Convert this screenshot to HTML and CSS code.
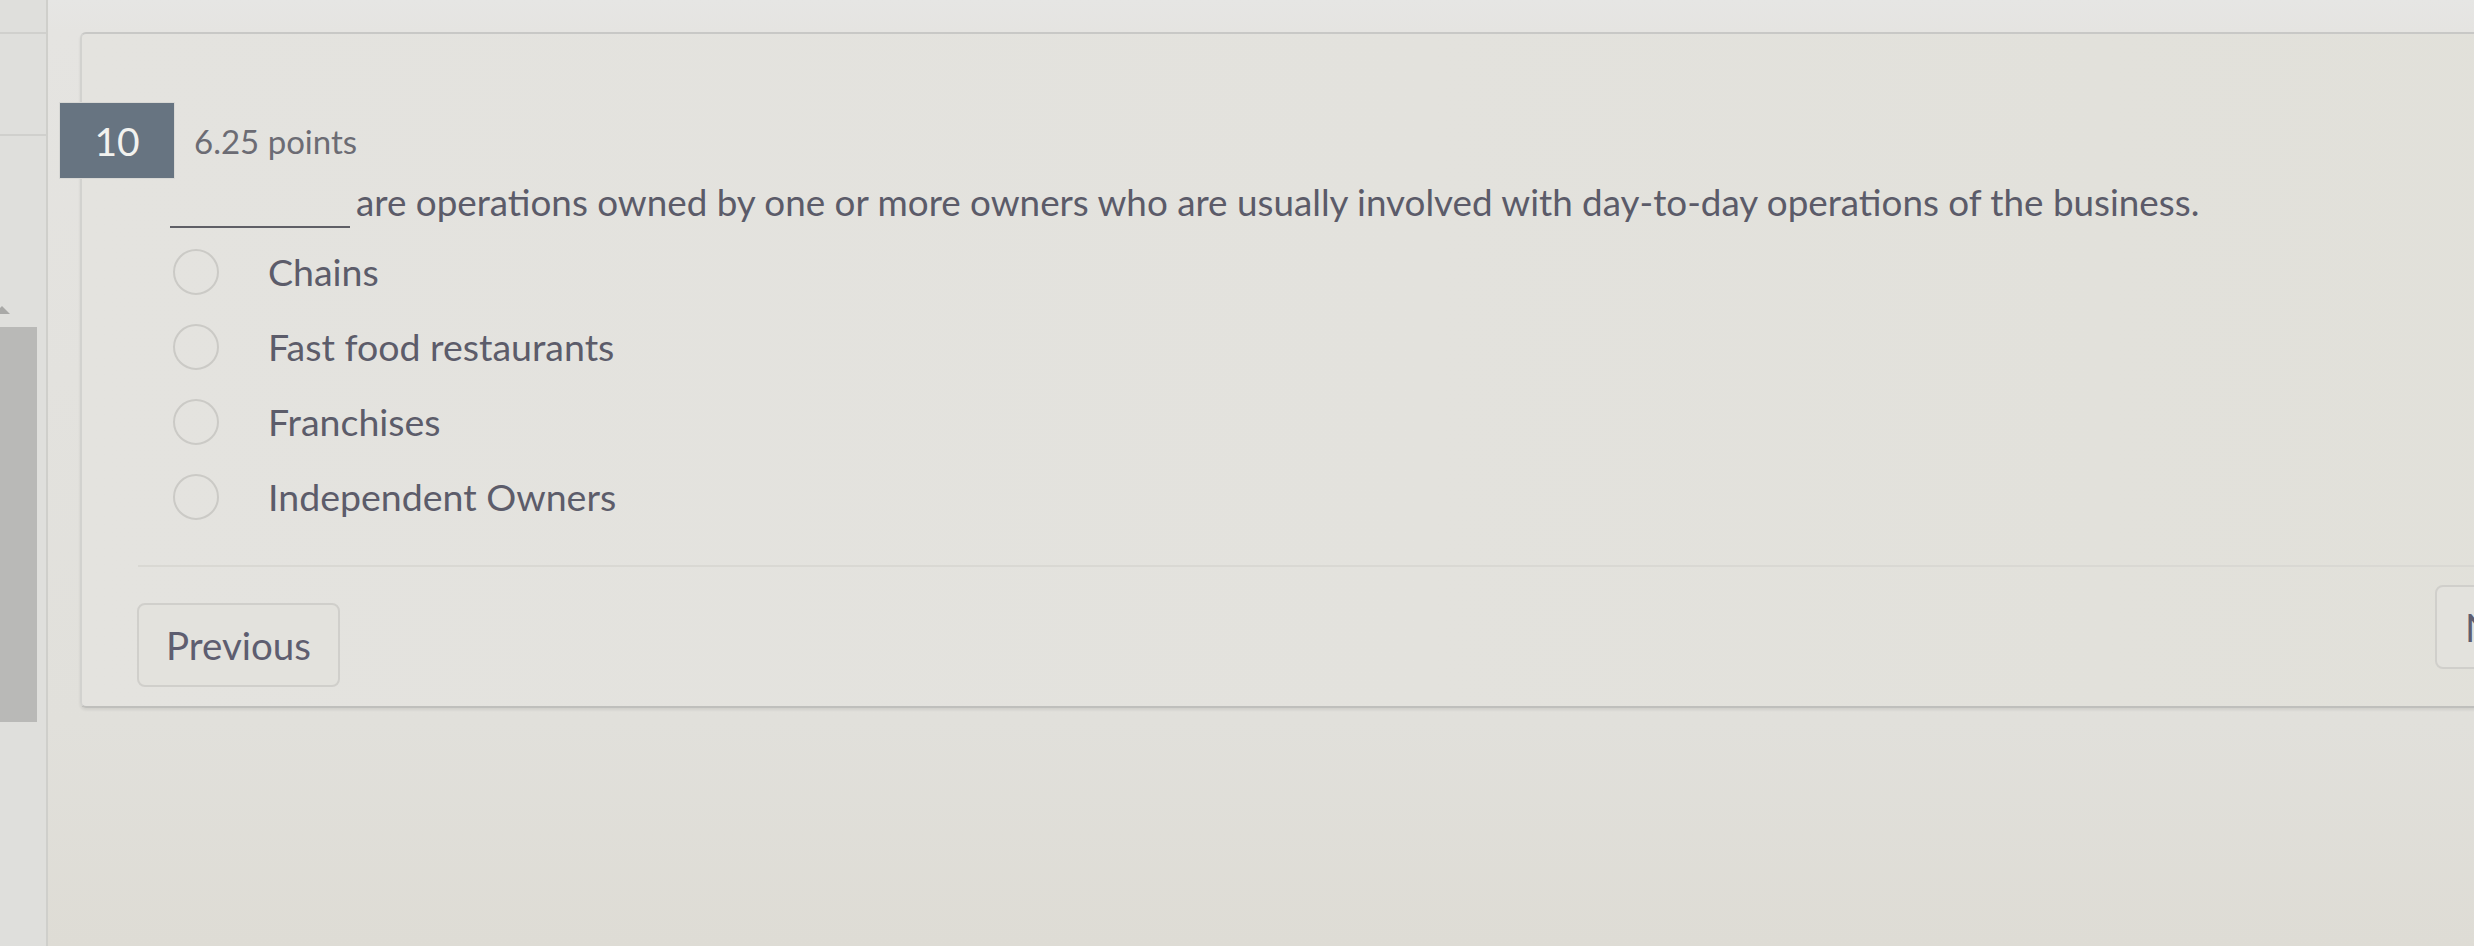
FILE: index.html
```html
<!DOCTYPE html>
<html lang="en">
<head>
<meta charset="utf-8">
<title>Question 10</title>
<link rel="stylesheet" href="styles.css">
</head>
<body>
<div class="page">
  <aside class="sidebar">
    <div class="sb-tick sb-tick-1"></div>
    <div class="sb-tick sb-tick-2"></div>
    <div class="sb-arrow"></div>
    <div class="sb-bar"></div>
  </aside>
  <main class="main">
    <section class="card">
      <div class="qhead">
        <div class="badge">10</div>
        <div class="points">6.25 points</div>
      </div>
      <p class="question"><span class="blank"></span>are operations owned by one or more owners who are usually involved with day-to-day operations of the business.</p>
      <ul class="options">
        <li class="option"><span class="radio"></span><span class="label">Chains</span></li>
        <li class="option"><span class="radio"></span><span class="label">Fast food restaurants</span></li>
        <li class="option"><span class="radio"></span><span class="label">Franchises</span></li>
        <li class="option"><span class="radio"></span><span class="label">Independent Owners</span></li>
      </ul>
      <div class="separator"></div>
      <div class="nav">
        <button class="btn">Previous</button>
        <button class="btn btn-next">Next</button>
      </div>
    </section>
  </main>
</div>
</body>
</html>
```

FILE: styles.css
```css
html, body {
  margin: 0;
  padding: 0;
}
body {
  width: 2474px;
  height: 946px;
  overflow: hidden;
  font-family: Lato, "Open Sans", "Liberation Sans", sans-serif;
  background: linear-gradient(180deg, #e6e6e4 0px, #e5e4e1 32px, #e1e0db 720px, #dedcd5 946px);
}
.page {
  display: flex;
  height: 946px;
}
.sidebar {
  width: 46px;
  flex: none;
  height: 946px;
  background: #dfdfdc;
  border-right: 2px solid #cfcfcb;
  display: flex;
  flex-direction: column;
}
.sb-tick {
  height: 2px;
  background: #d0d0cd;
}
.sb-tick-1 { margin-top: 32px; }
.sb-tick-2 { margin-top: 100px; }
.sb-arrow {
  margin-top: 170px;
  width: 0;
  height: 0;
  border-left: 8px solid transparent;
  border-right: 8px solid transparent;
  border-bottom: 8px solid #a9a9a7;
  margin-left: -6px;
}
.sb-bar {
  margin-top: 13px;
  width: 37px;
  height: 395px;
  background: #b9b9b7;
}
.main {
  flex: 1;
  padding-top: 32px;
}
.card {
  margin-left: 32px;
  width: 2700px;
  height: 676px;
  box-sizing: border-box;
  background: linear-gradient(90deg, #e4e3df 0%, #e3e2dd 50%, #e1e0d9 100%);
  border-top: 2px solid #c8c8c6;
  border-left: 2px solid #d2d2cf;
  border-bottom: 2px solid #bfbfbc;
  border-radius: 6px 0 0 6px;
  box-shadow: 0 2px 3px rgba(0, 0, 0, 0.08);
  display: flex;
  flex-direction: column;
}
.qhead {
  display: flex;
  align-items: center;
  margin-top: 69px;
  height: 75px;
}
.badge {
  margin-left: -22px;
  width: 114px;
  height: 75px;
  background: #677481;
  color: #f2f2ef;
  font-size: 39px;
  display: flex;
  align-items: center;
  justify-content: center;
  box-shadow: 0 0 0 1px #d8d8d5;
}
.points {
  margin-left: 20px;
  font-size: 33px;
  color: #6c6c74;
}
.question {
  margin: 2px 0 0 88px;
  font-size: 36.8px;
  line-height: 44px;
  color: #5b5b69;
}
.blank {
  display: inline-block;
  width: 180px;
  height: 20px;
  border-bottom: 2px solid #5f5f66;
  vertical-align: -12px;
  margin-right: 6px;
}
.options {
  list-style: none;
  margin: 6px 0 0 91px;
  padding: 0;
}
.option {
  display: flex;
  align-items: center;
  height: 75px;
}
.radio {
  width: 42px;
  height: 42px;
  border: 2px solid #cbcac6;
  border-radius: 50%;
  flex: none;
}
.label {
  margin-left: 49px;
  font-size: 37.5px;
  color: #5c5c6a;
}
.separator {
  margin: 31px 0 0 56px;
  height: 2px;
  background: #d9d8d3;
}
.nav {
  margin: 36px 0 0 55px;
  width: 2448px;
  display: flex;
  justify-content: space-between;
  align-items: flex-start;
}
.btn {
  width: 203px;
  height: 84px;
  box-sizing: border-box;
  border: 2px solid #d0cfcb;
  border-radius: 8px;
  background: #e3e2dd;
  font-family: Lato, "Open Sans", "Liberation Sans", sans-serif;
  font-size: 38.5px;
  color: #5e5e70;
  padding: 0;
}
.btn-next {
  width: 150px;
  margin-top: -18px;
  text-align: left;
  padding-left: 28px;
}
```
